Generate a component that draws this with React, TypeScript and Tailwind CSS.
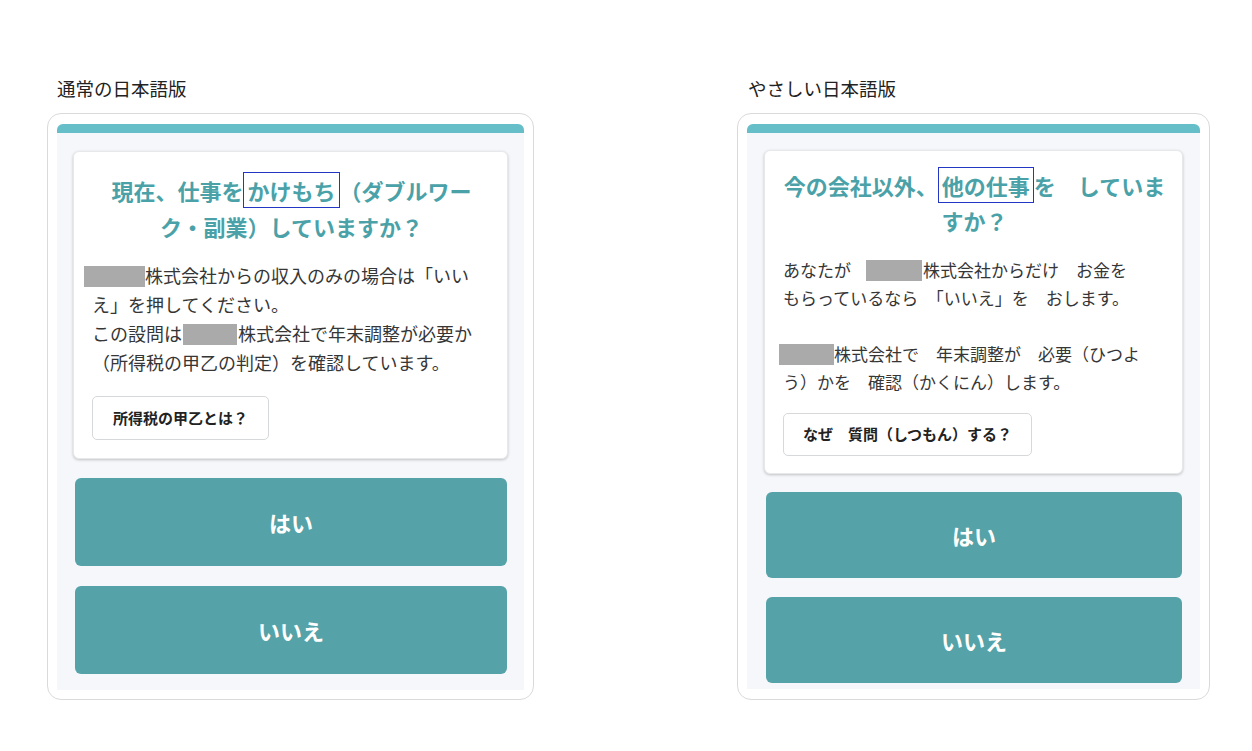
const font = { fontFamily: '"Noto Sans CJK JP", "Noto Sans", sans-serif' };

function Redact({ className }: { className: string }) {
  return <span className={`inline-block h-[21px] bg-[#aaaaaa] align-[-4px] ${className}`} />;
}

function Marked({ children }: { children: React.ReactNode }) {
  return <span className="border-[1.5px] border-[#2437c4] px-[3px] py-[1px]">{children}</span>;
}

function AnswerButtons({ top, gap, h }: { top: string; gap: string; h: string }) {
  return (
    <>
      <button className={`${top} ${h} ml-[2px] mr-[1px] rounded-[6px] bg-[#55a3a8] text-[22px] font-bold text-white`}>
        はい
      </button>
      <button className={`${gap} ${h} ml-[2px] mr-[1px] rounded-[6px] bg-[#55a3a8] text-[22px] font-bold text-white`}>
        いいえ
      </button>
    </>
  );
}

function NormalPanel() {
  return (
    <div className="flex w-[487px] flex-col">
      <div className="ml-[10px] h-[26px] text-[18.5px] leading-[26px] text-[#222]">通常の日本語版</div>
      <div className="mt-[12px] h-[587px] rounded-[14px] border border-[#dadada] bg-white px-[9px] pt-[10px] pb-[9px]">
        <div className="flex h-full flex-col overflow-hidden rounded-t-[6px] bg-[#f5f7fa]">
          <div className="h-[10px] bg-[#66bec8]" />
          <div className="flex flex-1 flex-col px-[16px] pt-[18px] pb-[16px]">
            <div className="rounded-[6px] border border-[#e6e8ea] bg-white pt-[20px] pr-[16px] pb-[18px] pl-[18px] shadow-[0_1px_3px_rgba(0,0,0,0.22)]">
              <h2 className="text-center text-[22px] leading-[36px] font-bold text-[#4aa2a8]">
                <span className="whitespace-nowrap">
                  現在、仕事を<Marked>かけもち</Marked>（ダブルワー
                </span>
                <br />
                ク・副業）していますか？
              </h2>
              <div className="mt-[17px] text-[18px] leading-[29px] whitespace-nowrap text-[#363636]">
                <div>
                  <Redact className="-ml-[8px] w-[61px]" />
                  株式会社からの収入のみの場合は「いい
                </div>
                <div>え」を押してください。</div>
                <div>
                  この設問は<Redact className="mx-[1px] w-[54px]" />
                  株式会社で年末調整が必要か
                </div>
                <div>（所得税の甲乙の判定）を確認しています。</div>
              </div>
              <button className="mt-[19px] h-[44px] rounded-[5px] border border-[#d6d8da] bg-white px-[20px] text-[15px] font-bold text-[#222]">
                所得税の甲乙とは？
              </button>
            </div>
            <AnswerButtons top="mt-[19px]" gap="mt-[20px]" h="h-[88px]" />
          </div>
        </div>
      </div>
    </div>
  );
}

function EasyPanel() {
  return (
    <div className="flex w-[473px] flex-col">
      <div className="ml-[11px] h-[26px] text-[18.5px] leading-[26px] text-[#222]">やさしい日本語版</div>
      <div className="mt-[12px] h-[587px] rounded-[14px] border border-[#dadada] bg-white px-[9px] pt-[10px] pb-[10px]">
        <div className="flex h-full flex-col overflow-hidden rounded-t-[6px] bg-[#f5f7fa]">
          <div className="h-[9px] bg-[#66bec8]" />
          <div className="flex flex-1 flex-col px-[17px] pt-[17px] pb-[6px]">
            <div className="rounded-[6px] border border-[#e6e8ea] bg-white pt-[17px] pr-[16px] pb-[17px] pl-[18px] shadow-[0_1px_3px_rgba(0,0,0,0.22)]">
              <h2 className="text-center text-[22px] leading-[35px] font-bold text-[#4aa2a8]">
                <span className="whitespace-nowrap">
                  今の会社以外、<Marked>他の仕事</Marked>を　していま
                </span>
                <br />
                すか？
              </h2>
              <div className="mt-[18px] text-[17px] leading-[28px] whitespace-nowrap text-[#363636]">
                <div>
                  あなたが<Redact className="mr-[1px] ml-[15px] w-[56px]" />
                  株式会社からだけ　お金を
                </div>
                <div>もらっているなら　「いいえ」を　おします。</div>
                <div className="h-[28px]" />
                <div>
                  <Redact className="-ml-[4px] w-[55px]" />
                  株式会社で　年末調整が　必要（ひつよ
                </div>
                <div>う）かを　確認（かくにん）します。</div>
              </div>
              <button className="mt-[17px] h-[43px] rounded-[5px] border border-[#d6d8da] bg-white px-[19px] text-[15px] font-bold text-[#222]">
                なぜ　質問（しつもん）する？
              </button>
            </div>
            <AnswerButtons top="mt-[18px]" gap="mt-[19px]" h="h-[86px]" />
          </div>
        </div>
      </div>
    </div>
  );
}

export default function App() {
  return (
    <div style={font} className="flex h-[751px] w-[1252px] gap-[203px] bg-white pt-[75px] pl-[47px]">
      <NormalPanel />
      <EasyPanel />
    </div>
  );
}
